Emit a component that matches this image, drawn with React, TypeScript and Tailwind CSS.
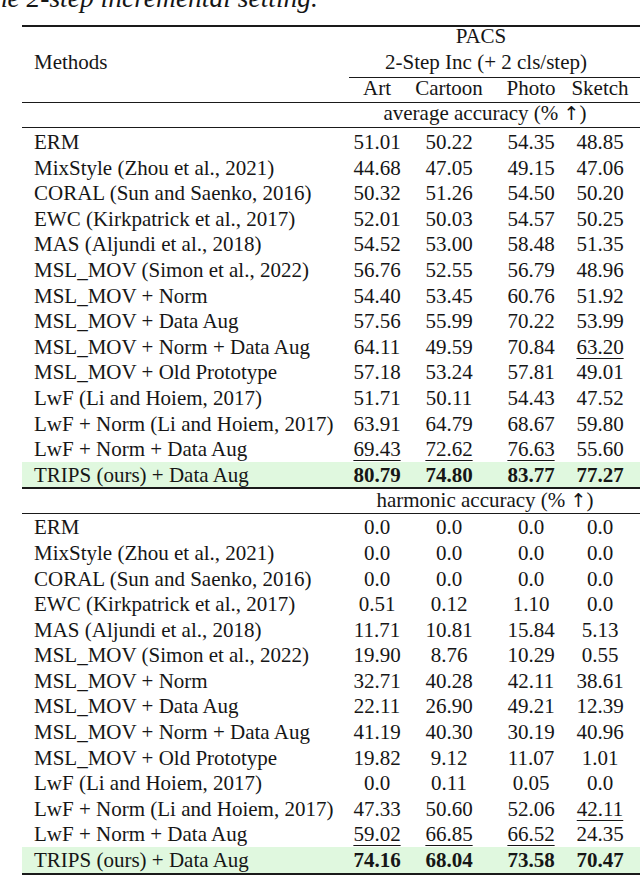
const avgRows: [string, string[], number[]?][] = [
  ["ERM", ["51.01", "50.22", "54.35", "48.85"]],
  ["MixStyle (Zhou et al., 2021)", ["44.68", "47.05", "49.15", "47.06"]],
  ["CORAL (Sun and Saenko, 2016)", ["50.32", "51.26", "54.50", "50.20"]],
  ["EWC (Kirkpatrick et al., 2017)", ["52.01", "50.03", "54.57", "50.25"]],
  ["MAS (Aljundi et al., 2018)", ["54.52", "53.00", "58.48", "51.35"]],
  ["MSL_MOV (Simon et al., 2022)", ["56.76", "52.55", "56.79", "48.96"]],
  ["MSL_MOV + Norm", ["54.40", "53.45", "60.76", "51.92"]],
  ["MSL_MOV + Data Aug", ["57.56", "55.99", "70.22", "53.99"]],
  ["MSL_MOV + Norm + Data Aug", ["64.11", "49.59", "70.84", "63.20"], [3]],
  ["MSL_MOV + Old Prototype", ["57.18", "53.24", "57.81", "49.01"]],
  ["LwF (Li and Hoiem, 2017)", ["51.71", "50.11", "54.43", "47.52"]],
  ["LwF + Norm (Li and Hoiem, 2017)", ["63.91", "64.79", "68.67", "59.80"]],
  ["LwF + Norm + Data Aug", ["69.43", "72.62", "76.63", "55.60"], [0, 1, 2]],
];

const harmRows: [string, string[], number[]?][] = [
  ["ERM", ["0.0", "0.0", "0.0", "0.0"]],
  ["MixStyle (Zhou et al., 2021)", ["0.0", "0.0", "0.0", "0.0"]],
  ["CORAL (Sun and Saenko, 2016)", ["0.0", "0.0", "0.0", "0.0"]],
  ["EWC (Kirkpatrick et al., 2017)", ["0.51", "0.12", "1.10", "0.0"]],
  ["MAS (Aljundi et al., 2018)", ["11.71", "10.81", "15.84", "5.13"]],
  ["MSL_MOV (Simon et al., 2022)", ["19.90", "8.76", "10.29", "0.55"]],
  ["MSL_MOV + Norm", ["32.71", "40.28", "42.11", "38.61"]],
  ["MSL_MOV + Data Aug", ["22.11", "26.90", "49.21", "12.39"]],
  ["MSL_MOV + Norm + Data Aug", ["41.19", "40.30", "30.19", "40.96"]],
  ["MSL_MOV + Old Prototype", ["19.82", "9.12", "11.07", "1.01"]],
  ["LwF (Li and Hoiem, 2017)", ["0.0", "0.11", "0.05", "0.0"]],
  ["LwF + Norm (Li and Hoiem, 2017)", ["47.33", "50.60", "52.06", "42.11"], [3]],
  ["LwF + Norm + Data Aug", ["59.02", "66.85", "66.52", "24.35"], [0, 1, 2]],
];

const grid = "grid grid-cols-[327px_56px_88px_76px_62px_40px]";

function Row({ name, vals, under = [], ours = false }: { name: string; vals: string[]; under?: number[]; ours?: boolean }) {
  return (
    <div className={`${grid} h-[25.6px] leading-[26px] ${ours ? "bg-[#e0f8df]" : ""}`}>
      <div className="pl-[12px] whitespace-nowrap">{name}</div>
      {vals.map((v, i) => (
        <div key={i} className={`text-center ${ours ? "font-bold" : ""}`}>
          <span className={under.includes(i) ? "underline decoration-1 underline-offset-[4px]" : ""}>{v}</span>
        </div>
      ))}
      <div />
    </div>
  );
}

function SectionLabel({ label, lead }: { label: string; lead: string }) {
  return (
    <div className={`${grid} h-[24px] ${lead}`}>
      <div />
      <div className="col-span-4 text-center pr-[10px] whitespace-nowrap">
        {label} (% <span className="font-['DejaVu_Sans',sans-serif] text-[19px]">↑</span>)
      </div>
    </div>
  );
}

export default function App() {
  return (
    <div className="w-[640px] h-[875px] overflow-hidden bg-white text-[#161616] font-['Liberation_Serif',serif] text-[21px]">
      {/* caption tail, cut at top */}
      <div className="h-[25px] overflow-hidden">
        <p className="-mt-[18px] -ml-[14px] text-[27.5px] leading-[32px] italic whitespace-nowrap">
          the 2-step incremental setting.
        </p>
      </div>

      <div className="ml-[22px] w-[660px]">
        <div className="h-[2px] bg-[#1a1a1a]" />

        {/* header */}
        <div className={`${grid} h-[24px] leading-[19px]`}>
          <div />
          <div className="col-span-4 text-center pr-[18px]">PACS</div>
        </div>
        <div className={`${grid} h-[26px] leading-[22px]`}>
          <div className="pl-[12px]">Methods</div>
          <div className="col-span-4 text-center pr-[8px]">2-Step Inc (+ 2 cls/step)</div>
        </div>
        <div className={grid}>
          <div />
          <div className="col-span-5 h-px bg-[#1a1a1a]" />
        </div>
        <div className={`${grid} h-[24px] leading-[21px]`}>
          <div />
          <div className="text-center">Art</div>
          <div className="text-center">Cartoon</div>
          <div className="text-center">Photo</div>
          <div className="text-center">Sketch</div>
        </div>
        <div className="h-px bg-[#1a1a1a]" />

        <SectionLabel label="average accuracy" lead="leading-[20px]" />
        <div className="h-px bg-[#1a1a1a] mb-[1px]" />
        {avgRows.map(([n, v, u]) => (
          <Row key={n} name={n} vals={v} under={u} />
        ))}
        <Row name="TRIPS (ours) + Data Aug" vals={["80.79", "74.80", "83.77", "77.27"]} ours />
        <div className="h-[2px] bg-[#1a1a1a]" />

        <SectionLabel label="harmonic accuracy" lead="leading-[22px]" />
        <div className="h-px bg-[#1a1a1a]" />
        {harmRows.map(([n, v, u]) => (
          <Row key={n} name={n} vals={v} under={u} />
        ))}
        <Row name="TRIPS (ours) + Data Aug" vals={["74.16", "68.04", "73.58", "70.47"]} ours />
        <div className="h-[2px] bg-[#1a1a1a]" />
      </div>
    </div>
  );
}
